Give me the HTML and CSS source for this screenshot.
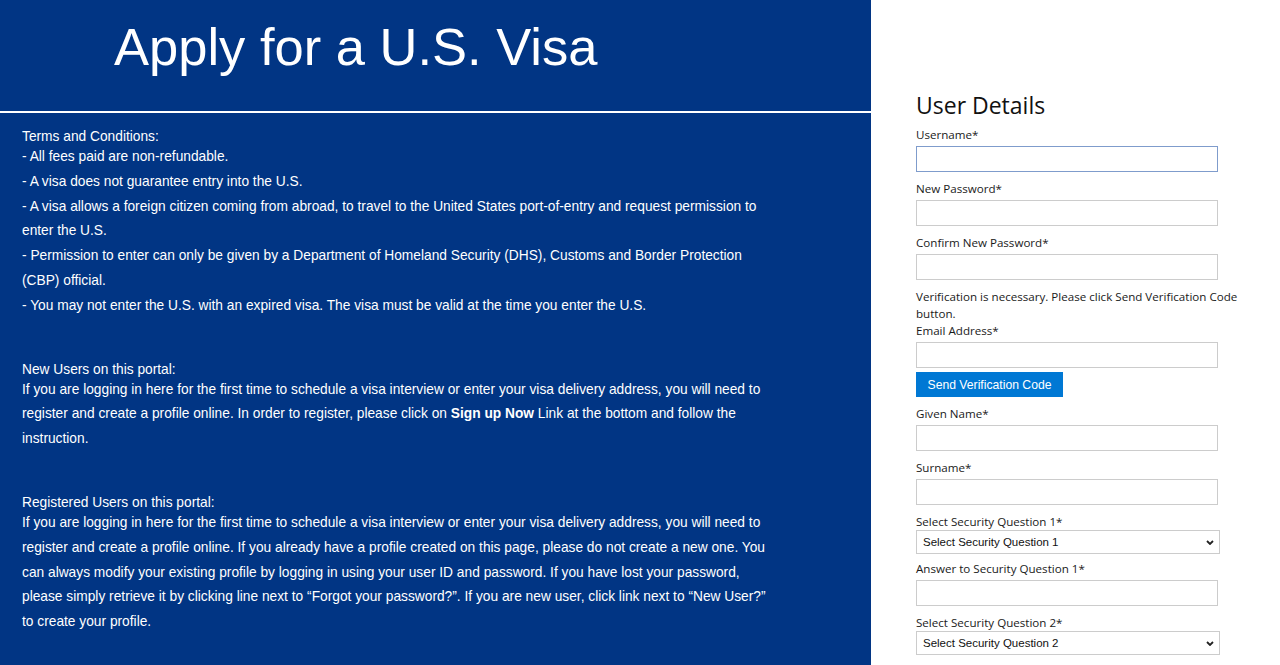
FILE: index.html
```html
<!DOCTYPE html>
<html lang="en">
<head>
    <meta charset="UTF-8">
    <meta name="viewport" content="width=device-width, initial-scale=1.0">
    <title>Apply for a U.S. Visa</title>
    <link rel="stylesheet" href="styles.css">
</head>
<body>
<div class="page">
    <div class="intro">
        <div class="banner">
            <h1>Apply for a U.S. Visa</h1>
        </div>
        <div class="notes">
            <div class="block">
                <div class="block-title">Terms and Conditions:</div>
                <div class="block-body">
                    <p>- All fees paid are non-refundable.</p>
                    <p>- A visa does not guarantee entry into the U.S.</p>
                    <p>- A visa allows a foreign citizen coming from abroad, to travel to the United States port-of-entry and request permission to enter the U.S.</p>
                    <p>- Permission to enter can only be given by a Department of Homeland Security (DHS), Customs and Border Protection (CBP) official.</p>
                    <p>- You may not enter the U.S. with an expired visa. The visa must be valid at the time you enter the U.S.</p>
                </div>
            </div>
            <div class="block">
                <div class="block-title">New Users on this portal:</div>
                <div class="block-body">
                    <p>If you are logging in here for the first time to schedule a visa interview or enter your visa delivery address, you will need to register and create a profile online. In order to register, please click on <b>Sign up Now</b> Link at the bottom and follow the instruction.</p>
                </div>
            </div>
            <div class="block">
                <div class="block-title">Registered Users on this portal:</div>
                <div class="block-body">
                    <p>If you are logging in here for the first time to schedule a visa interview or enter your visa delivery address, you will need to register and create a profile online. If you already have a profile created on this page, please do not create a new one. You can always modify your existing profile by logging in using your user ID and password. If you have lost your password, please simply retrieve it by clicking line next to &ldquo;Forgot your password?&rdquo;. If you are new user, click link next to &ldquo;New User?&rdquo; to create your profile.</p>
                </div>
            </div>
        </div>
    </div>

    <div class="signup">
        <h2>User Details</h2>
        <div class="field">
            <label for="username">Username*</label>
            <input type="text" id="username" class="active">
        </div>
        <div class="field">
            <label for="newPassword">New Password*</label>
            <input type="password" id="newPassword">
        </div>
        <div class="field">
            <label for="confirmPassword">Confirm New Password*</label>
            <input type="password" id="confirmPassword">
        </div>
        <p class="hint">Verification is necessary. Please click Send Verification Code button.</p>
        <div class="field field-email">
            <label for="email">Email Address*</label>
            <input type="email" id="email">
            <button type="button" class="send-code">Send Verification Code</button>
        </div>
        <div class="field">
            <label for="givenName">Given Name*</label>
            <input type="text" id="givenName">
        </div>
        <div class="field">
            <label for="surname">Surname*</label>
            <input type="text" id="surname">
        </div>
        <div class="field field-select">
            <label for="question1">Select Security Question 1*</label>
            <div class="select-wrap">
                <select id="question1">
                    <option>Select Security Question 1</option>
                </select>
                <svg class="chevron" width="8" height="5" viewBox="0 0 8 5"><path d="M1 1l3 3 3-3" fill="none" stroke="#222" stroke-width="1.8"/></svg>
            </div>
        </div>
        <div class="field">
            <label for="answer1">Answer to Security Question 1*</label>
            <input type="text" id="answer1">
        </div>
        <div class="field field-select">
            <label for="question2">Select Security Question 2*</label>
            <div class="select-wrap">
                <select id="question2">
                    <option>Select Security Question 2</option>
                </select>
                <svg class="chevron" width="8" height="5" viewBox="0 0 8 5"><path d="M1 1l3 3 3-3" fill="none" stroke="#222" stroke-width="1.8"/></svg>
            </div>
        </div>
    </div>
</div>
</body>
</html>
```

FILE: styles.css
```css
body{
    margin:0;
    background:#fff;
}
.page{
    display:flex;
    min-height:100vh;
}

/* left blue column */
.intro{
    width:871px;
    flex-shrink:0;
    background:#013584;
    color:#fff;
    font-family:"Liberation Sans", Arial, sans-serif;
}
.banner{
    height:111px;
    border-bottom:2px solid #fff;
    box-sizing:content-box;
}
.banner h1{
    margin:0;
    padding:17px 0 0 114px;
    font-size:52.5px;
    line-height:60px;
    font-weight:normal;
}
.notes{
    padding:15px 0 0 22px;
    width:753px;
    font-size:13.75px;
}
.block + .block{
    margin-top:42px;
}
.block-title{
    line-height:17px;
}
.block-body p{
    margin:0;
    line-height:24.8px;
}

/* right form column */
.signup{
    flex:1;
    padding:90px 0 0 45px;
    font-family:"Open Sans", "Noto Sans", sans-serif;
    color:#1a1a1a;
}
.signup h2{
    margin:0 0 6px;
    font-size:23px;
    line-height:30px;
    font-weight:normal;
    color:#111;
}
.field{
    margin-bottom:8px;
}
.field label{
    display:block;
    font-size:11.6px;
    line-height:17px;
    margin-bottom:3px;
}
.field input{
    display:block;
    box-sizing:border-box;
    width:302px;
    height:26px;
    margin:0;
    border:1px solid #ccc;
    background:#fff;
    outline:none;
}
.field input.active{
    border-color:#7f9ccc;
}
.hint{
    margin:0;
    width:340px;
    font-size:11.6px;
    line-height:17px;
}
.field-email{
    margin-bottom:8px;
}
.send-code{
    display:block;
    margin-top:4px;
    width:147px;
    height:25px;
    padding:0;
    border:none;
    background:#0078d4;
    color:#fff;
    font-family:"Liberation Sans", Arial, sans-serif;
    font-size:12.2px;
}
.field-select{
    margin-bottom:6px;
}
.field-select label{
    margin-bottom:0;
}
.select-wrap{
    position:relative;
    width:304px;
}
.select-wrap select{
    appearance:none;
    -webkit-appearance:none;
    display:block;
    box-sizing:border-box;
    width:304px;
    height:24px;
    margin:0;
    padding:0 0 0 6px;
    border:1px solid #ccc;
    border-radius:0;
    background:#fff;
    color:#111;
    font-family:"Liberation Sans", Arial, sans-serif;
    font-size:11.5px;
}
.chevron{
    position:absolute;
    right:6px;
    top:10px;
    pointer-events:none;
}
```
